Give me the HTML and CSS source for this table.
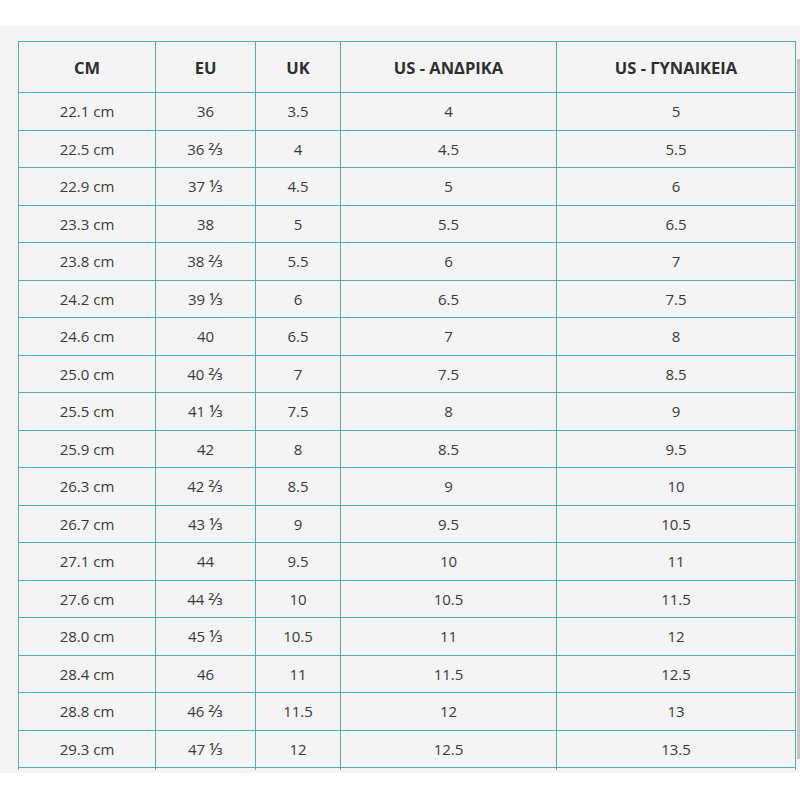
FILE: index.html
```html
<!DOCTYPE html>
<html lang="el">
<head>
<meta charset="utf-8">
<title>Μεγέθη</title>
<link rel="stylesheet" href="styles.css">
</head>
<body>
<div class="top"></div>
<div class="panel">
  <div class="scroll">
    <table class="sizes">
      <colgroup>
        <col class="c1"><col class="c2"><col class="c3"><col class="c4"><col class="c5">
      </colgroup>
      <thead>
        <tr><th>CM</th><th>EU</th><th>UK</th><th>US - ΑΝΔΡΙΚΑ</th><th>US - ΓΥΝΑΙΚΕΙΑ</th></tr>
      </thead>
      <tbody>
        <tr><td>22.1 cm</td><td>36</td><td>3.5</td><td>4</td><td>5</td></tr>
        <tr><td>22.5 cm</td><td>36 <span class="frac">⅔</span></td><td>4</td><td>4.5</td><td>5.5</td></tr>
        <tr><td>22.9 cm</td><td>37 <span class="frac">⅓</span></td><td>4.5</td><td>5</td><td>6</td></tr>
        <tr><td>23.3 cm</td><td>38</td><td>5</td><td>5.5</td><td>6.5</td></tr>
        <tr><td>23.8 cm</td><td>38 <span class="frac">⅔</span></td><td>5.5</td><td>6</td><td>7</td></tr>
        <tr><td>24.2 cm</td><td>39 <span class="frac">⅓</span></td><td>6</td><td>6.5</td><td>7.5</td></tr>
        <tr><td>24.6 cm</td><td>40</td><td>6.5</td><td>7</td><td>8</td></tr>
        <tr><td>25.0 cm</td><td>40 <span class="frac">⅔</span></td><td>7</td><td>7.5</td><td>8.5</td></tr>
        <tr><td>25.5 cm</td><td>41 <span class="frac">⅓</span></td><td>7.5</td><td>8</td><td>9</td></tr>
        <tr><td>25.9 cm</td><td>42</td><td>8</td><td>8.5</td><td>9.5</td></tr>
        <tr><td>26.3 cm</td><td>42 <span class="frac">⅔</span></td><td>8.5</td><td>9</td><td>10</td></tr>
        <tr><td>26.7 cm</td><td>43 <span class="frac">⅓</span></td><td>9</td><td>9.5</td><td>10.5</td></tr>
        <tr><td>27.1 cm</td><td>44</td><td>9.5</td><td>10</td><td>11</td></tr>
        <tr><td>27.6 cm</td><td>44 <span class="frac">⅔</span></td><td>10</td><td>10.5</td><td>11.5</td></tr>
        <tr><td>28.0 cm</td><td>45 <span class="frac">⅓</span></td><td>10.5</td><td>11</td><td>12</td></tr>
        <tr><td>28.4 cm</td><td>46</td><td>11</td><td>11.5</td><td>12.5</td></tr>
        <tr><td>28.8 cm</td><td>46 <span class="frac">⅔</span></td><td>11.5</td><td>12</td><td>13</td></tr>
        <tr><td>29.3 cm</td><td>47 <span class="frac">⅓</span></td><td>12</td><td>12.5</td><td>13.5</td></tr>
        <tr class="partial"><td></td><td></td><td></td><td></td><td></td></tr>
      </tbody>
    </table>
  </div>
  <div class="scrollbar"></div>
</div>
</body>
</html>
```
FILE: styles.css
```css
html, body {
  margin: 0;
  padding: 0;
  background: #ffffff;
}
body {
  font-family: "Open Sans", "Noto Sans", "DejaVu Sans", sans-serif;
  color: #333333;
}
.top {
  height: 26px;
}
.panel {
  position: relative;
  background: #f4f4f4;
  height: 747px;
  box-sizing: border-box;
  padding-bottom: 3px;
}
.scroll {
  height: 744px;
  overflow: hidden;
  padding: 15px 0 0 18px;
  box-sizing: border-box;
}
.scrollbar {
  position: absolute;
  right: 0;
  top: 33px;
  width: 3px;
  height: 700px;
  background: #c4c4c4;
}
.sizes {
  border-collapse: collapse;
  table-layout: fixed;
  width: 777px;
}
.c1 { width: 137px; }
.c2 { width: 100px; }
.c3 { width: 85px; }
.c4 { width: 216px; }
.c5 { width: 239px; }
.sizes th,
.sizes td {
  border: 1.5px solid #4fb0ac;
  text-align: center;
  padding: 0;
}
.sizes th {
  height: 50px;
  font-size: 16.5px;
  font-weight: 700;
  color: #2e2e2e;
}
.sizes td {
  height: 36.5px;
  font-size: 15px;
  line-height: 18px;
  color: #3a3a3a;
}
.frac {
  font-size: 17px;
  line-height: 18px;
}
```
